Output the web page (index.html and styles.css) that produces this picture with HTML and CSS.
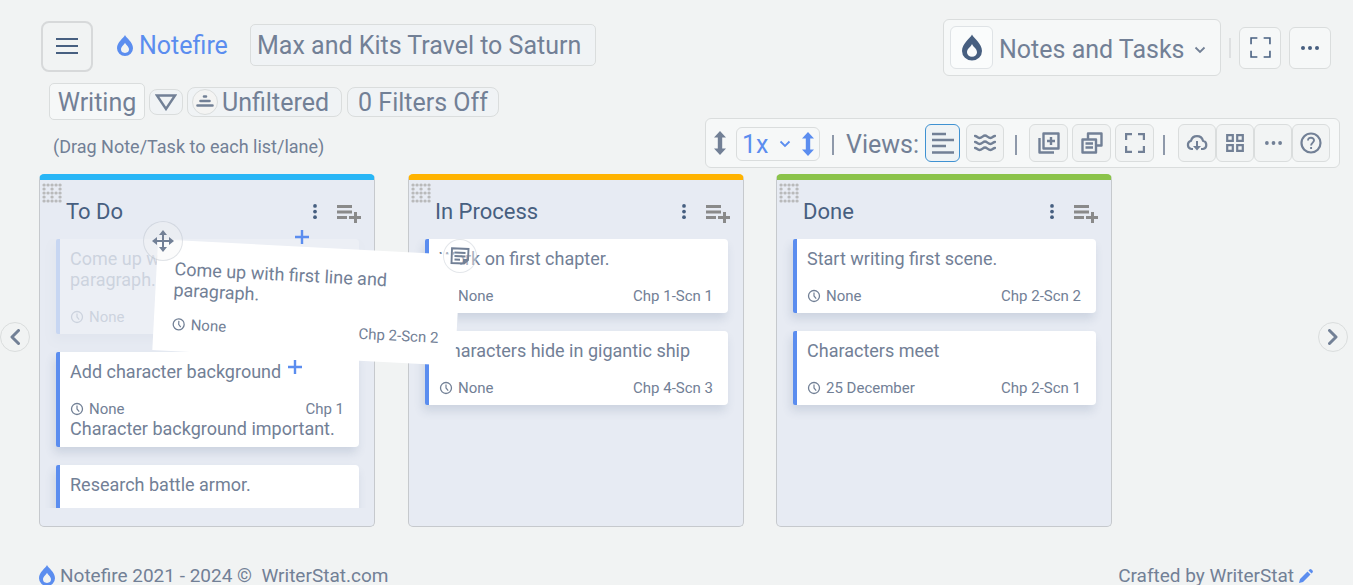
FILE: index.html
```html
<!DOCTYPE html>
<html lang="en">
<head>
<meta charset="utf-8">
<meta name="viewport" content="width=device-width, initial-scale=1">
<title>Notefire</title>
<link rel="stylesheet" href="styles.css">
</head>
<body>
<svg class="defs" aria-hidden="true">
  <symbol id="drop" viewBox="0 0 20 26"><path fill-rule="evenodd" d="M10 0C11.500 3.500 20 9 20 16.500a10 9.500 0 0 1-20 0C0 9 8.500 3.500 10 0ZM10 9.500C9 12.500 5 14 5 17.800a5 4.500 0 0 0 10 0C15 14 11 12.500 10 9.500Z"/></symbol>
  <symbol id="chevron" viewBox="0 0 12 8"><path d="M1.500 1.500 6 6l4.500-4.500" fill="none" stroke="currentColor" stroke-width="1.800"/></symbol>
  <symbol id="updown" viewBox="0 0 12 24"><path d="M6 0 12 6.500H8.200v11H12L6 24 0 17.500h3.800v-11H0Z"/></symbol>
  <symbol id="corners" viewBox="0 0 20 20"><path d="M1 7V1h6M13 1h6v6M19 13v6h-6M7 19H1v-6" fill="none" stroke="currentColor"/></symbol>
  <symbol id="dots" viewBox="0 0 18 4"><circle cx="2" cy="2" r="2"/><circle cx="9" cy="2" r="2"/><circle cx="16" cy="2" r="2"/></symbol>
  <symbol id="clock" viewBox="0 0 14 14"><path d="M7 3.500V7l2.200 2.600" fill="none" stroke="currentColor" stroke-width="1.200"/><circle cx="7" cy="7" r="5.500" fill="none" stroke="currentColor" stroke-width="1.300"/></symbol>
  <symbol id="kebab" viewBox="0 0 4 16"><circle cx="2" cy="2" r="2"/><circle cx="2" cy="8" r="2"/><circle cx="2" cy="14" r="2"/></symbol>
  <symbol id="listadd" viewBox="0 0 24 18"><path d="M0 0h15v3H0zM0 5.500h15v3H0zM0 11h10v3H0zM17 7h3v4h4v3h-4v4h-3v-4h-5v-3h5z"/></symbol>
  <symbol id="grip" viewBox="0 0 20 20"><path d="M2 2H18.500M2 10H18.500M2 18H18.500M2 6H2.100M10 6h.1M18 6h.1M2 14h.1M10 14h.1M18 14h.1" fill="none" stroke="currentColor" stroke-width="3.200" stroke-linecap="round" stroke-dasharray="0.1 3.900"/></symbol>
  <symbol id="arrow" viewBox="0 0 10 16"><path d="m1.500 1.500 6.500 6.500-6.500 6.500" fill="none" stroke="currentColor" stroke-width="3" stroke-linecap="round" stroke-linejoin="round"/></symbol>
  <symbol id="plus" viewBox="0 0 14 14"><path d="M7 0v14M0 7h14" fill="none" stroke="currentColor" stroke-width="2.400"/></symbol>
</svg>

<header class="topbar">
  <div class="topbar-left">
    <button class="menu" aria-label="Menu"><svg width="22" height="18" viewBox="0 0 22 18"><path d="M0 2h22M0 9h22M0 16h22" stroke="currentColor" stroke-width="2"/></svg></button>
    <a class="brand" href="#"><svg width="16" height="21"><use href="#drop"/></svg>Notefire</a>
    <input class="project" aria-label="Project title" value="Max and Kits Travel to Saturn">
  </div>
  <div class="topbar-right">
    <button class="section"><span class="section-icon"><svg width="20" height="27"><use href="#drop"/></svg></span><span class="section-name">Notes and Tasks</span><svg class="section-caret" width="12" height="8"><use href="#chevron"/></svg></button>
    <span class="divider"></span>
    <button class="square" aria-label="Full screen"><svg width="21" height="21" stroke-width="1.500"><use href="#corners"/></svg></button>
    <button class="square" aria-label="More"><svg width="18" height="4"><use href="#dots"/></svg></button>
  </div>
</header>

<section class="controls">
  <div>
    <div class="chips">
      <button class="chip chip-main">Writing</button>
      <button class="chip chip-small" aria-label="Filter"><svg width="22" height="17" viewBox="0 0 22 17"><path d="M2 1.500h18L11 15Z" fill="none" stroke="currentColor" stroke-width="2.400"/></svg></button>
      <button class="chip chip-sort"><span class="round"><svg width="18" height="13" viewBox="0 0 18 13"><path d="M8 1.500h2M4.500 6h9M1.500 10.500h15" fill="none" stroke="currentColor" stroke-width="2.600" stroke-linecap="round"/></svg></span>Unfiltered</button>
      <button class="chip chip-count">0 Filters Off</button>
    </div>
    <p class="hint">(Drag Note/Task to each list/lane)</p>
  </div>
  <div class="toolbar">
    <svg width="12" height="24"><use href="#updown"/></svg>
    <div class="scale">
      <select aria-label="Row height"><option>1x</option></select>
      <svg width="12" height="8"><use href="#chevron"/></svg>
      <svg class="scale-arrow" width="12" height="24"><use href="#updown"/></svg>
    </div>
    <span class="pipe"></span>
    <span class="views">Views:</span>
    <div class="view-tools">
      <button class="tool active" aria-label="List view"><svg width="22" height="22" viewBox="0 0 22 22"><path d="M0 2h14M0 8h22M0 14h14M0 20.500h22" stroke="currentColor" stroke-width="2.600"/></svg></button>
      <button class="tool" aria-label="Wave view"><svg width="22" height="18" viewBox="0 0 22 18"><path d="M0 2.500c2-2 3 1.500 5.500 1.500S9 1.500 11 1.500 14 4 16.500 4 20 .5 22 2.500M0 8.500c2-2 3 1.500 5.500 1.500S9 7.500 11 7.500s3 2.500 5.500 2.500S20 6.500 22 8.500M0 14.500c2-2 3 1.500 5.500 1.500s3.500-2.500 5.500-2.500 3 2.500 5.500 2.500 3.500-3.500 5.500-1.500" fill="none" stroke="currentColor" stroke-width="2.400"/></svg></button>
    </div>
    <span class="pipe"></span>
    <div class="page-tools">
      <button class="tool" aria-label="Add"><svg width="22" height="22" viewBox="0 0 22 22"><path d="M5.500 1.500h15v15h-15zM13 5v8M9 9h8M1.500 6v14.500H16" fill="none" stroke="currentColor" stroke-width="2.400" stroke-linejoin="round"/></svg></button>
      <button class="tool" aria-label="Duplicate"><svg width="22" height="22" viewBox="0 0 22 22"><path d="M7 7V1.500h13.500v12H15M1.500 7.500H15v13H1.500zM4.500 11.500h7.500M4.500 15.500h7.500" fill="none" stroke="currentColor" stroke-width="2.400" stroke-linejoin="round"/></svg></button>
      <button class="tool" aria-label="Expand"><svg width="20" height="20" stroke-width="2.400"><use href="#corners"/></svg></button>
    </div>
    <span class="pipe"></span>
    <div class="app-tools">
      <button class="tool" aria-label="Download"><svg width="22" height="18" viewBox="0 0 22 18"><path d="M7 15H5.500a4.200 4.200 0 0 1-.5-8.200 6.200 6.200 0 0 1 12 0A4.200 4.200 0 0 1 17 15h-2" fill="none" stroke="currentColor" stroke-width="2.200"/><path d="M10 7h2v5h3l-4 4.500L7 12h3z"/></svg></button>
      <button class="tool" aria-label="Grid"><svg width="18" height="18" viewBox="0 0 18 18"><path d="M1.200 1.200h5.600v5.600H1.200zM11.200 1.200h5.600v5.600h-5.600zM1.200 11.200h5.600v5.600H1.200zM11.200 11.200h5.600v5.600h-5.600z" fill="none" stroke="currentColor" stroke-width="2.200"/></svg></button>
      <button class="tool" aria-label="More tools"><svg width="17" height="4"><use href="#dots"/></svg></button>
      <button class="tool" aria-label="Help"><svg width="22" height="22" viewBox="0 0 22 22"><path d="M8 8.500C8 4.500 14.200 5 14 8.500c0 2-2.900 2.300-2.900 5M11.100 15v2" fill="none" stroke="currentColor" stroke-width="1.900"/><circle cx="11" cy="11" r="9.500" fill="none" stroke="currentColor" stroke-width="2.200"/></svg></button>
    </div>
  </div>
</section>

<main class="board">
  <section class="lane lane-todo">
    <header class="lane-head"><svg class="grip" width="20" height="20"><use href="#grip"/></svg><h2>To Do</h2><button class="bare" aria-label="Lane menu"><svg width="4" height="15"><use href="#kebab"/></svg></button><button class="bare add" aria-label="Add card"><svg width="24" height="18"><use href="#listadd"/></svg></button></header>
    <div class="cards">
      <article class="card ghost"><h3>Come up with first line and paragraph.</h3><div class="meta"><svg width="14" height="14"><use href="#clock"/></svg>None</div></article>
      <article class="card"><h3>Add character background</h3><div class="meta"><svg width="14" height="14"><use href="#clock"/></svg>None<span>Chp 1</span></div><p>Character background important.</p></article>
      <article class="card"><h3>Research battle armor.</h3></article>
    </div>
  </section>
  <section class="lane lane-process">
    <header class="lane-head"><svg class="grip" width="20" height="20"><use href="#grip"/></svg><h2>In Process</h2><button class="bare" aria-label="Lane menu"><svg width="4" height="15"><use href="#kebab"/></svg></button><button class="bare add" aria-label="Add card"><svg width="24" height="18"><use href="#listadd"/></svg></button></header>
    <div class="cards">
      <article class="card"><h3>Work on first chapter.</h3><div class="meta"><svg width="14" height="14"><use href="#clock"/></svg>None<span>Chp 1-Scn 1</span></div></article>
      <article class="card"><h3>Characters hide in gigantic ship</h3><div class="meta"><svg width="14" height="14"><use href="#clock"/></svg>None<span>Chp 4-Scn 3</span></div></article>
    </div>
  </section>
  <section class="lane lane-done">
    <header class="lane-head"><svg class="grip" width="20" height="20"><use href="#grip"/></svg><h2>Done</h2><button class="bare" aria-label="Lane menu"><svg width="4" height="15"><use href="#kebab"/></svg></button><button class="bare add" aria-label="Add card"><svg width="24" height="18"><use href="#listadd"/></svg></button></header>
    <div class="cards">
      <article class="card"><h3>Start writing first scene.</h3><div class="meta"><svg width="14" height="14"><use href="#clock"/></svg>None<span>Chp 2-Scn 2</span></div></article>
      <article class="card"><h3>Characters meet</h3><div class="meta"><svg width="14" height="14"><use href="#clock"/></svg>25 December<span>Chp 2-Scn 1</span></div></article>
    </div>
  </section>

  <article class="dragged"><h3>Come up with first line and paragraph.</h3><div class="meta"><svg width="14" height="14"><use href="#clock"/></svg>None<span>Chp 2-Scn 2</span></div></article>
  <span class="handle handle-move"><svg width="22" height="22" viewBox="0 0 22 22"><path d="M11 3v16M3 11h16" stroke="currentColor" stroke-width="2"/><path d="m11 0 4 5H7zM11 22l4-5H7zM0 11l5-4v8zM22 11l-5-4v8z"/></svg></span>
  <span class="handle handle-note"><svg width="20" height="18" viewBox="0 0 20 18"><path d="M2 1.200 18.500 2 18 13l-4 3.500L1.500 16zM4.500 5.500l11 .5M4.500 9l11 .5M4.500 12.500l5.500.2M18 13h-4v3" fill="none" stroke="currentColor" stroke-width="1.900"/></svg></span>
  <svg class="mark mark-first" width="14" height="14"><use href="#plus"/></svg>
  <svg class="mark mark-second" width="14" height="14"><use href="#plus"/></svg>
</main>

<button class="pager pager-prev" aria-label="Previous"><svg width="10" height="16"><use href="#arrow"/></svg></button>
<button class="pager pager-next" aria-label="Next"><svg width="10" height="16"><use href="#arrow"/></svg></button>

<footer class="footer">
  <div class="footer-side"><svg class="blue" width="16" height="21"><use href="#drop"/></svg><span>Notefire 2021 - 2024 ©&nbsp; <a href="#">WriterStat.com</a></span></div>
  <div class="footer-side"><span>Crafted by WriterStat</span><svg class="blue" width="14" height="14" viewBox="0 0 14 14"><path d="m0 14 1-4 7.500-7.500 3 3L4 13zM9.500 1.500l1-1q1-.8 2 0l1 1q.8 1 0 2l-1 1z"/></svg></div>
</footer>
</body>
</html>
```
FILE: styles.css
```css
* { box-sizing: border-box; }

body {
  margin: 0;
  height: 100vh;
  position: relative;
  overflow: hidden;
  background: #f1f3f3;
  color: #728096;
  font-family: Roboto, "Noto Sans", sans-serif;
  font-size: 18px;
}

h2, h3, p { margin: 0; font-weight: 400; }
a { color: inherit; text-decoration: none; }
svg { display: block; flex: none; fill: currentColor; }
.defs { position: absolute; width: 0; height: 0; }

button, input, select {
  font: inherit;
  color: inherit;
  margin: 0;
  padding: 0;
  border: 1px solid #dadddd;
  background: #f6f8f8;
}

button { display: flex; align-items: center; justify-content: center; }

/* Top bar */
.topbar {
  display: flex;
  justify-content: space-between;
  padding: 19px 22px 0 41px;
  font-size: 25px;
}
.topbar-left { display: flex; align-items: center; height: 54px; }
.menu {
  width: 52px;
  height: 51px;
  border: 2px solid #d7d9da;
  border-radius: 8px;
  background: #f1f3f3;
  color: #475f80;
}
.brand { display: flex; align-items: center; gap: 6px; width: 134px; margin: 0 0 2px 24px; color: #5b8def; }
.project { width: 346px; height: 42px; margin: 0 0 2px -1px; padding: 0 6px; border-radius: 5px; background: #f0f3f5; }
.topbar-right { display: flex; align-items: center; gap: 8px; color: #475f80; }
.section { height: 57px; width: 278px; padding: 0 14px 0 6px; border-radius: 6px; color: #728096; justify-content: flex-start; }
.section-icon {
  display: flex;
  align-items: center;
  justify-content: center;
  width: 43px;
  height: 43px;
  margin-right: 6px;
  border: 1px solid #dfe3e6;
  border-radius: 6px;
  background: #fafcfc;
  color: #475f80;
}
.section-name { padding-top: 3px; }
.section-caret { margin: 4px 0 0 auto; }
.divider { width: 2px; height: 20px; background: #dee0e1; }
.square { width: 42px; height: 42px; border-radius: 6px; }

/* Filters and toolbar */
.controls { display: flex; justify-content: space-between; align-items: flex-end; padding: 7px 13px 0 49px; }
.chips { display: flex; align-items: center; gap: 4px; height: 37px; font-size: 25px; }
.chip { height: 30px; padding-top: 2px; border-radius: 8px; background: #f0f3f5; white-space: nowrap; }
.chip-main { width: 96px; height: 37px; border-radius: 5px; background: #f6f8f8; }
.chip-small { width: 34px; height: 26px; }
.chip-sort { width: 155px; padding: 2px 10px 0 4px; gap: 4px; justify-content: flex-start; }
.chip-count { width: 152px; margin-left: 1px; }
.round {
  display: flex;
  align-items: center;
  justify-content: center;
  width: 26px;
  height: 26px;
  margin-bottom: 2px;
  border: 1px solid #dadddd;
  border-radius: 50%;
  background: #f4f4f3;
}
.hint { margin: 16px 0 10px 4px; line-height: 22px; }

.toolbar {
  display: flex;
  align-items: center;
  height: 50px;
  padding: 0 9px 0 8px;
  border: 1px solid #dadddd;
  border-radius: 6px;
  background: #f6f8f8;
  font-size: 25px;
}
.scale {
  display: flex;
  align-items: center;
  gap: 5px;
  width: 84px;
  height: 34px;
  margin: 2px 12px 0 10px;
  padding: 0 5px;
  border: 1px solid #dadddd;
  border-radius: 6px;
  color: #5b8def;
}
.scale select { width: 32px; border: 0; appearance: none; background: transparent; }
.scale-arrow { margin-left: auto; }
.pipe { width: 2px; height: 20px; margin-top: 4px; background: #8e99aa; }
.views { width: 72px; margin: 3px 7px 0 12px; }
.view-tools { display: flex; gap: 6px; margin-right: 11px; }
.page-tools { display: flex; gap: 4px; margin: 0 9px 0 12px; }
.app-tools { display: flex; margin-left: 13px; }
.tool { width: 39px; height: 38px; border-radius: 6px; background: #f2f4f4; }
.app-tools .tool { width: 38px; }
.view-tools .tool { width: 38px; }
.view-tools .active { width: 35px; border-color: #3f92d2; background: #eff3f5; }

/* Board */
.board { position: relative; display: flex; gap: 32px; margin-top: 6px; padding: 0 39px; }
.lane {
  flex: 0 0 336px;
  height: 353px;
  border: 1px solid #c6c9cd;
  border-top: 6px solid #29b6f6;
  border-radius: 5px;
  background: #e7ebf3;
}
.lane-process { border-top-color: #ffb300; margin-left: 1px; }
.lane-done { border-top-color: #8bc34a; }
.lane-head { display: flex; align-items: center; height: 59px; padding: 0 13px 0 2px; color: #475f80; }
.lane-head h2 { flex: 1; padding: 4px 0 0 4px; font-size: 22px; }
.grip { align-self: flex-start; margin-top: 3px; color: #b9babb; }
.bare { border: 0; background: none; padding-top: 4px; }
.add { margin-left: 20px; padding-top: 8px; color: #8a8a8a; }
.cards { display: flex; flex-direction: column; gap: 18px; height: 269px; padding: 0 15px 0 16px; overflow: hidden; }
.card {
  flex: none;
  min-height: 74px;
  padding: 9px 15px 8px 10px;
  border-left: 4px solid #5b8def;
  border-radius: 2px 4px 4px 2px;
  background: #fff;
  box-shadow: -2px 6px 10px rgba(71, 95, 128, 0.16);
}
.ghost { opacity: 0.22; }
h3, .card p { font-size: 18px; line-height: 21px; }
.meta { display: flex; align-items: center; gap: 5px; margin-top: 18px; font-size: 15px; line-height: 18px; }
.meta span { margin-left: auto; }

.dragged {
  position: absolute;
  left: 155px;
  top: 73px;
  width: 303px;
  padding: 18px;
  background: #fff;
  transform: rotate(3deg);
}
.dragged .meta { margin-top: 15px; }
.handle {
  position: absolute;
  display: flex;
  align-items: center;
  justify-content: center;
  border: 1px solid rgba(114, 128, 150, 0.2);
  border-radius: 50%;
}
.handle-move { left: 143px; top: 47px; width: 40px; height: 40px; background: rgba(241, 243, 243, 0.3); }
.handle-note { left: 443px; top: 65px; width: 34px; height: 34px; background: rgba(255, 255, 255, 0.4); }
.mark { position: absolute; color: #5b8def; }
.mark-first { left: 295px; top: 56px; }
.mark-second { left: 288px; top: 186px; }

.pager { position: absolute; top: 322px; width: 30px; height: 30px; border-radius: 50%; background: #f1f3f3; }
.pager-prev { left: 0; }
.pager-prev svg { transform: scaleX(-1); }
.pager-next { right: 5px; }

.footer { display: flex; justify-content: space-between; margin-top: 38px; padding: 0 40px 0 39px; font-size: 19px; line-height: 21px; }
.footer-side { display: flex; align-items: center; gap: 5px; }
.blue { color: #5b8def; }
```
